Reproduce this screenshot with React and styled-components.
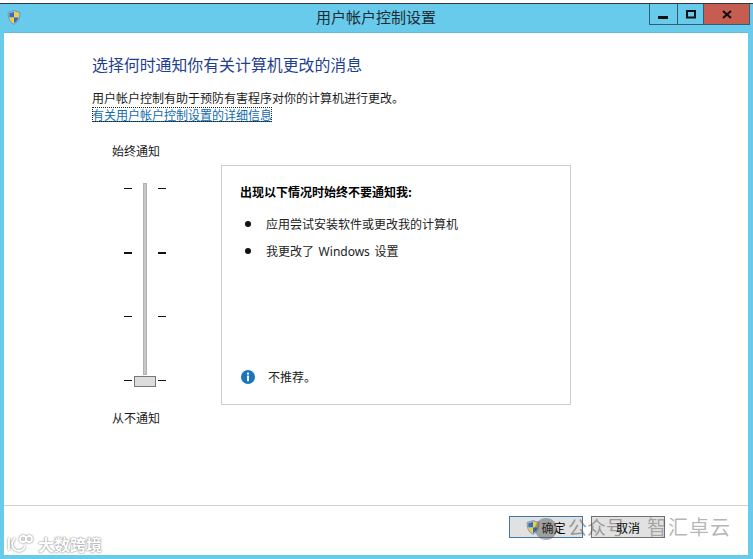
import React from 'react';
import styled, { createGlobalStyle } from 'styled-components';

const GlobalStyle = createGlobalStyle`
  html, body {
    margin: 0;
    padding: 0;
    background: #fff;
  }
  * {
    box-sizing: border-box;
  }
`;

const FONT = '"Noto Sans CJK SC", "Noto Sans", sans-serif';

const Page = styled.div`
  position: relative;
  width: 753px;
  height: 559px;
  overflow: hidden;
  padding-top: 3px;
  background: #fff;
  font-family: ${FONT};
  font-size: 12px;
  color: #1a1a1a;
`;

const Frame = styled.div`
  display: flex;
  flex-direction: column;
  height: 556px;
  border-top: 1px solid #2b3a45;
  background: #69cbeb;
  padding: 0 5px 4px 4px;
`;

const TitleBar = styled.div`
  position: relative;
  display: flex;
  align-items: center;
  justify-content: center;
  height: 29px;
  flex: none;
  font-size: 15px;
  color: #1c2b33;
  padding-bottom: 3px;
  border-bottom: 1px solid #62bcdb;
`;

const ShieldSlot = styled.div`
  position: absolute;
  left: 3px;
  top: 6px;
  display: flex;
`;

const WindowButtons = styled.div`
  position: absolute;
  right: -2px;
  top: 0;
  display: flex;
  height: 21px;
  border: 1px solid #2f5f73;
  border-top: none;
`;

const WindowButton = styled.div`
  display: flex;
  align-items: center;
  justify-content: center;
  width: ${props => props.$w}px;
  background: ${props => props.$bg || 'transparent'};
  border-left: ${props => (props.$first ? 'none' : '1px solid #2f5f73')};
`;

const Client = styled.div`
  flex: 1;
  display: flex;
  flex-direction: column;
  background: #fff;
  min-height: 0;
`;

const Main = styled.div`
  flex: 1;
  padding: 20px 0 0 88px;
`;

const Heading = styled.h1`
  margin: 0;
  font-size: 15.9px;
  line-height: 24px;
  font-weight: 400;
  color: #1f3f8f;
`;

const Description = styled.p`
  margin: 12px 0 0;
  line-height: 17px;
`;

const DetailLink = styled.a`
  display: inline-block;
  line-height: 15px;
  color: #0f6bb0;
  text-decoration: underline;
  outline: 1px dotted #222;
  outline-offset: -1px;
`;

const Columns = styled.div`
  display: flex;
  margin-top: 19px;
`;

const SliderColumn = styled.div`
  width: 129px;
  flex: none;
`;

const SliderLabel = styled.div`
  padding-left: 20px;
  line-height: 17px;
`;

const SliderBody = styled.div`
  position: relative;
  display: flex;
  flex-direction: column;
  justify-content: space-between;
  width: 42px;
  height: 193px;
  margin: 29px 0 28px 32px;
`;

const Track = styled.div`
  position: absolute;
  left: 19px;
  top: -5px;
  bottom: 6px;
  width: 4px;
  background: #c8c8c8;
  border: 1px solid #b0b0b0;
`;

const Thumb = styled.div`
  position: absolute;
  left: 10px;
  bottom: -6px;
  width: 22px;
  height: 11px;
  background: #dcdcdc;
  border: 1px solid #777;
`;

const TickRow = styled.div`
  display: flex;
  justify-content: space-between;
`;

const Tick = styled.span`
  width: 8px;
  height: ${props => (props.$thick ? 2 : 1)}px;
  background: #111;
`;

const InfoPanel = styled.div`
  display: flex;
  flex-direction: column;
  width: 350px;
  height: 240px;
  margin-top: 23px;
  padding: 17px 18px 19px 18px;
  border: 1px solid #ccc;
`;

const PanelTitle = styled.div`
  font-weight: 700;
  line-height: 18px;
  color: #000;
`;

const BulletList = styled.ul`
  margin: 9px 0 0;
  padding: 0;
  list-style: none;
  flex: 1;
`;

const BulletItem = styled.li`
  display: flex;
  align-items: center;
  height: 27px;
  color: #222;
  font-family: "Noto Sans", "Noto Sans CJK SC", sans-serif;
  white-space: pre;
  word-spacing: 1.5px;

  &::before {
    content: '';
    width: 6px;
    height: 6px;
    margin: 0 15px 0 5px;
    border-radius: 50%;
    background: #111;
  }
`;

const Notice = styled.div`
  display: flex;
  align-items: center;
  gap: 13px;
  margin-left: 1px;
  color: #222;
`;

const Footer = styled.div`
  display: flex;
  justify-content: flex-end;
  gap: 8px;
  flex: none;
  height: 50px;
  padding: 10px 83px 0 0;
  border-top: 1px solid #d0d0d0;
`;

const DialogButton = styled.div`
  display: flex;
  align-items: center;
  justify-content: center;
  gap: 1px;
  width: 74px;
  height: 22px;
  background: #e1e1e1;
  border: 1px solid ${props => (props.$primary ? '#3f7aa6' : '#707070')};
  color: #000;
`;

const WechatWatermark = styled.div`
  position: absolute;
  left: 535px;
  top: 513px;
  display: flex;
  align-items: center;
  font-size: 19px;
  line-height: 28px;
  color: rgba(90, 90, 90, 0.55);
`;

const WechatDot = styled.span`
  width: 22px;
  height: 22px;
  margin: 4px 11px 0 0;
  border-radius: 50%;
  background: rgba(80, 80, 80, 0.45);
`;

const WechatName = styled.span`
  margin-left: 22px;
  font-size: 20px;
  letter-spacing: 1px;
  color: rgba(90, 90, 90, 0.45);
`;

const BrandWatermark = styled.div`
  position: absolute;
  left: 7px;
  top: 533px;
  display: flex;
  align-items: center;
  gap: 5px;
  font-size: 16px;
  font-weight: 700;
  line-height: 22px;
  color: #fff;
  text-shadow: 0 0 2px #888, 0 0 1px #888;
`;

const Shield = ({ size = 14 }) => (
  <svg width={size} height={size + 1} viewBox="0 0 16 17">
    <path d="M8 0.6 L14.6 2.6 C15 8.5 13.6 13.4 8 16.4 C2.4 13.4 1 8.5 1.4 2.6 Z" fill="#b9c4cc" stroke="#6d7f8c" strokeWidth="0.8" />
    <path d="M8 2.2 L8 8.4 L2.8 8.4 C2.6 6.6 2.6 5 2.7 3.7 Z" fill="#2f6fc4" />
    <path d="M8 2.2 L13.3 3.7 C13.4 5 13.4 6.6 13.2 8.4 L8 8.4 Z" fill="#f4cf3a" />
    <path d="M2.8 8.4 L8 8.4 L8 14.8 C4.8 13 3.3 11 2.8 8.4 Z" fill="#f4cf3a" />
    <path d="M8 8.4 L13.2 8.4 C12.7 11 11.2 13 8 14.8 Z" fill="#2f6fc4" />
  </svg>
);

const InfoIcon = () => (
  <svg width="14" height="14" viewBox="0 0 14 14">
    <circle cx="7" cy="7" r="7" fill="#1b75bc" />
    <rect x="6" y="2.6" width="2" height="2" fill="#fff" />
    <rect x="6" y="5.6" width="2" height="5.6" fill="#fff" />
  </svg>
);

const BrandLogo = () => (
  <svg width="26" height="18" viewBox="0 0 26 18" fill="none" stroke="#fff" strokeWidth="1.8" style={{ filter: 'drop-shadow(0 0 1px #777)' }}>
    <path d="M2 3 V15" />
    <path d="M8 3 L5 8 C5 13 8 16 12 16 C15 16 17 14 18 11" />
    <circle cx="16" cy="4" r="3" />
    <circle cx="22" cy="4" r="3" />
  </svg>
);

const ticks = [false, true, false, false];

const App = () => (
  <Page>
    <GlobalStyle />
    <Frame>
      <TitleBar>
        <ShieldSlot><Shield /></ShieldSlot>
        用户帐户控制设置
        <WindowButtons>
          <WindowButton $w={27} $first>
            <svg width="11" height="12" viewBox="0 0 11 12"><rect x="0" y="8" width="10" height="3" fill="#111" /></svg>
          </WindowButton>
          <WindowButton $w={26}>
            <svg width="10" height="9" viewBox="0 0 10 9"><rect x="1" y="1" width="8" height="6.5" fill="none" stroke="#111" strokeWidth="2" /></svg>
          </WindowButton>
          <WindowButton $w={46} $bg="#c75c50">
            <svg width="10" height="9" viewBox="0 0 10 9"><path d="M1 1 L9 8 M9 1 L1 8" stroke="#111" strokeWidth="2.2" /></svg>
          </WindowButton>
        </WindowButtons>
      </TitleBar>
      <Client>
        <Main>
          <Heading>选择何时通知你有关计算机更改的消息</Heading>
          <Description>用户帐户控制有助于预防有害程序对你的计算机进行更改。</Description>
          <DetailLink>有关用户帐户控制设置的详细信息</DetailLink>
          <Columns>
            <SliderColumn>
              <SliderLabel>始终通知</SliderLabel>
              <SliderBody>
                <Track />
                {ticks.map((thick, i) => (
                  <TickRow key={i}>
                    <Tick $thick={thick} />
                    <Tick $thick={thick} />
                  </TickRow>
                ))}
                <Thumb />
              </SliderBody>
              <SliderLabel>从不通知</SliderLabel>
            </SliderColumn>
            <InfoPanel>
              <PanelTitle>出现以下情况时始终不要通知我:</PanelTitle>
              <BulletList>
                <BulletItem>应用尝试安装软件或更改我的计算机</BulletItem>
                <BulletItem>我更改了 Windows 设置</BulletItem>
              </BulletList>
              <Notice>
                <InfoIcon />
                不推荐。
              </Notice>
            </InfoPanel>
          </Columns>
        </Main>
        <Footer>
          <DialogButton $primary><Shield />确定</DialogButton>
          <DialogButton>取消</DialogButton>
        </Footer>
      </Client>
    </Frame>
    <WechatWatermark>
      <WechatDot />
      公众号
      <WechatName>智汇卓云</WechatName>
    </WechatWatermark>
    <BrandWatermark>
      <BrandLogo />
      大数跨境
    </BrandWatermark>
  </Page>
);

export default App;
